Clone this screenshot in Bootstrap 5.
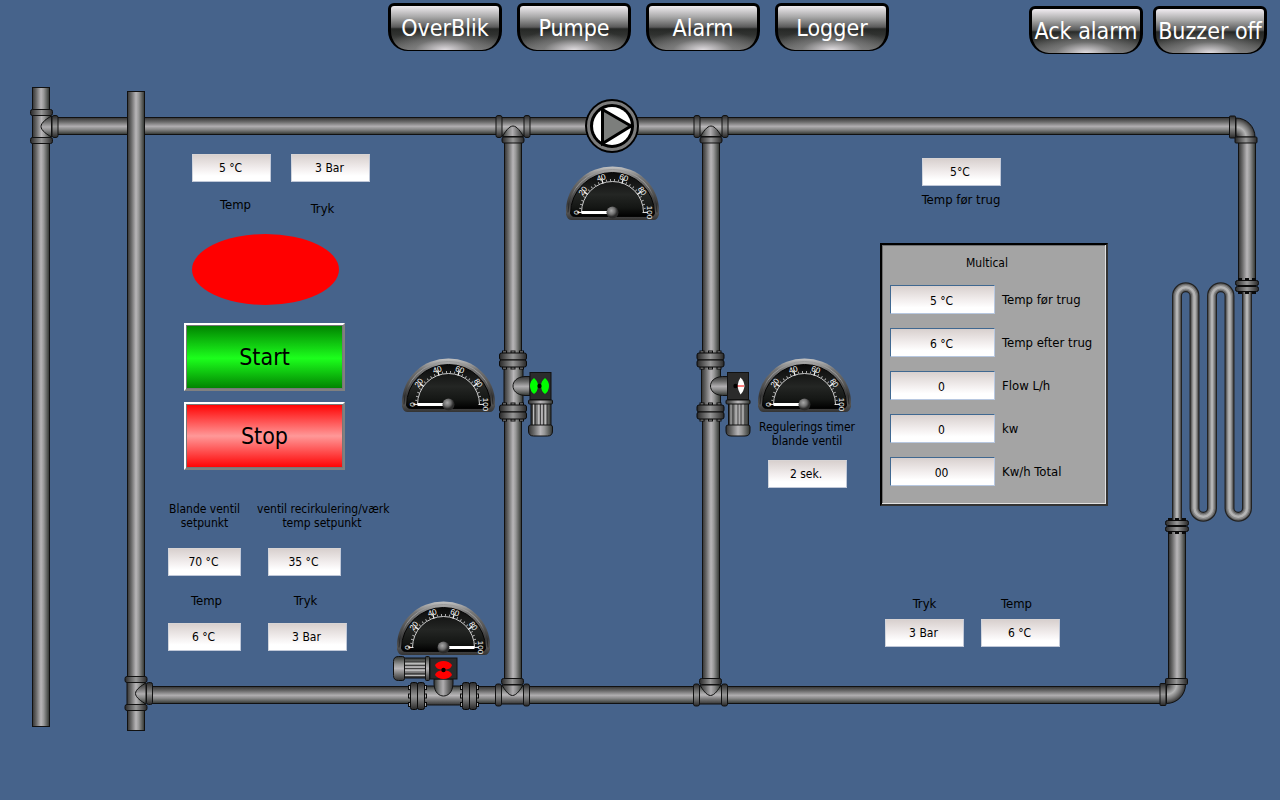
<!DOCTYPE html>
<html lang="da">
<head>
<meta charset="utf-8">
<meta name="viewport" content="width=device-width, initial-scale=1">
<title>Varmeanlæg</title>
<link href="https://cdn.jsdelivr.net/npm/bootstrap@5.3.0/dist/css/bootstrap.min.css" rel="stylesheet">
<style>
  body { background: #46638b; color: #000; font-family: "DejaVu Sans Condensed", "DejaVu Sans", sans-serif; font-size: 12px; line-height: 14px; }

  .topbar { grid-template-columns: 388fr 641fr 251fr; height: 56px; align-items: start; }
  .topbar nav { grid-column: 2; gap: 15px; padding-top: 3px; }
  .topbar .alarm-actions { grid-column: 3; gap: 10px; padding-top: 6px; }
  .btn-chrome {
    --bs-btn-color: #fff; --bs-btn-hover-color: #fff; --bs-btn-active-color: #fff;
    width: 114px; height: 48px; padding: 0; flex: none;
    font-size: 23px; line-height: 44px; white-space: nowrap;
    display: flex; justify-content: center;
    border: solid #000; border-width: 3px 3px 1px; border-radius: 6px 6px 20px 20px;
    background:
      radial-gradient(ellipse 60px 22px at 50% 100%, #e0dce0, rgba(140,140,140,.6) 50%, transparent),
      linear-gradient(#f0ecf0 0, #a8a8a8 25%, #5a5a5a 48%, #262826 52%, #303230 65%, #6a6a6a 100%);
    background-origin: padding-box;
  }
  .btn-chrome:hover { border-color: #000; }

  .zones { inset: 0; grid-template-columns: 168fr 222fr 368fr 98fr 24fr 228fr 172fr; }
  .zone-left { grid-column: 2; padding-top: 98px; }
  .zone-timer { grid-column: 4; padding-top: 364px; gap: 12px; }
  .zone-right { grid-column: 6; padding-top: 102px; }

  .readout {
    width: 79px; height: 28px; padding: 0 2px 1px 0; text-align: center; color: #000; font-size: 12px;
    border: 1px solid; border-color: #d8d4d4 #c0c8d8 #c0c8d8 #d0d4dc; border-radius: 0;
    background: linear-gradient(#d8d0ce, #f4f0f0 55%, #fff 80%);
  }
  .readout-narrow { width: 73px; }
  .readout-wide { width: 105px; height: 29px; padding: 2px 2px 0 0; border-color: #406890 #b8c8e0 #b8c8e0 #406890; }
  .caption { font-size: 13px; white-space: nowrap; }

  .indent-md { padding-left: 16px; }
  .indent-lg { padding-left: 24px; }
  .supply { gap: 20px; height: 62px; }
  .gap-label { gap: 20px; }
  .lamp { width: 147px; height: 71px; border-radius: 50%; background: #f00; }
  .btn-motor {
    width: 161px; height: 68px; padding: 0; border-radius: 0; font-size: 23px; --bs-btn-color: #000;
    border: 2px solid; border-color: #fff #808080 #808080 #fff; box-shadow: inset 0 0 0 1px #777;
  }
  .btn-start { background: linear-gradient(#008000, #1cff1c 52%, #008000); }
  .btn-stop { background: linear-gradient(#f00, #ff9898 50%, #f00); }
  .motor-buttons { gap: 11px; }
  .stack-gap { margin-top: 18px; }
  .pair { display: grid; grid-template-columns: 73px 79px; column-gap: 27px; row-gap: 15px; margin-top: 18px; }
  .setpoint-names { display: grid; grid-template-columns: 73px 130px; column-gap: 16px; margin-top: 32px; white-space: nowrap; }

  .inlet { padding-right: 66px; gap: 7px; }
  .multical { margin-top: 36px; border: 2px solid; border-color: #000 #333 #333 #000; background: #a4a4a4; box-shadow: inset -1px -1px #e0e0e0, inset 1px 1px #707070; padding: 11px 8px 18px; }
  .multical h2 { font-size: 12px; line-height: 14px; margin: 0 14px 15px 0; }
  .multical .meters { gap: 14px; }
  .multical .meter { gap: 7px; align-items: center; }
  .outlet { margin-top: 91px; padding-left: 5px; gap: 17px; }

  .dial { font: 8px "Liberation Sans", sans-serif; fill: #fff; text-anchor: middle; }
</style>
</head>
<body>
<header class="topbar d-grid">
  <nav class="d-flex" aria-label="Sider">
    <button class="btn btn-chrome" type="button">OverBlik</button>
    <button class="btn btn-chrome" type="button">Pumpe</button>
    <button class="btn btn-chrome" type="button">Alarm</button>
    <button class="btn btn-chrome" type="button">Logger</button>
  </nav>
  <div class="alarm-actions d-flex">
    <button class="btn btn-chrome" type="button">Ack alarm</button>
    <button class="btn btn-chrome" type="button">Buzzer off</button>
  </div>
</header>

<main class="position-relative">
  <svg class="d-block w-100" viewBox="0 56 1280 744" aria-hidden="true">
    <defs>
      <linearGradient id="gv"><stop offset="0" stop-color="#333"/><stop offset=".22" stop-color="#686868"/><stop offset=".5" stop-color="#b8b6b8"/><stop offset=".66" stop-color="#989898"/><stop offset="1" stop-color="#303430"/></linearGradient>
      <linearGradient id="gh" x2="0" y2="1"><stop offset="0" stop-color="#333"/><stop offset=".25" stop-color="#686868"/><stop offset=".52" stop-color="#b0aeb0"/><stop offset=".7" stop-color="#888"/><stop offset="1" stop-color="#303430"/></linearGradient>
      <linearGradient id="gc"><stop offset="0" stop-color="#282828"/><stop offset=".5" stop-color="#969696"/><stop offset="1" stop-color="#282828"/></linearGradient>
      <linearGradient id="gch" x2="0" y2="1"><stop offset="0" stop-color="#282828"/><stop offset=".5" stop-color="#969696"/><stop offset="1" stop-color="#282828"/></linearGradient>
      <radialGradient id="elbA" gradientUnits="userSpaceOnUse" cx="0" cy="0" r="20"><stop offset="0" stop-color="#222"/><stop offset=".25" stop-color="#707070"/><stop offset=".5" stop-color="#b4b4b4"/><stop offset=".75" stop-color="#707070"/><stop offset="1" stop-color="#222"/></radialGradient>
      <linearGradient id="rim" x2="0" y2="1"><stop offset="0" stop-color="#c4c4c4"/><stop offset=".2" stop-color="#777"/><stop offset=".7" stop-color="#383838"/><stop offset=".85" stop-color="#555"/><stop offset="1" stop-color="#333"/></linearGradient>
      <linearGradient id="rimIn"><stop offset="0" stop-color="#222"/><stop offset=".1" stop-color="#999"/><stop offset=".9" stop-color="#999"/><stop offset="1" stop-color="#222"/></linearGradient>
      <linearGradient id="face" x2="0" y2="1"><stop offset="0" stop-color="#0a0a0a"/><stop offset=".5" stop-color="#242624"/><stop offset=".8" stop-color="#141614"/><stop offset="1" stop-color="#000"/></linearGradient>
      <radialGradient id="hub" cx=".4" cy=".35"><stop offset="0" stop-color="#a8a8a8"/><stop offset=".6" stop-color="#707070"/><stop offset="1" stop-color="#2c2c2c"/></radialGradient>

      <g id="tee" stroke="#111">
        <rect x="-8.5" y="-14" width="18" height="28" fill="url(#gv)"/>
        <path d="M10.5 -10.5C6 -8 0 -4 0 0S6 8 10.5 10.5z" fill="url(#gh)"/>
        <rect x="-10.5" y="-17" width="22" height="6" rx="2" fill="url(#gc)"/>
        <rect x="-10.5" y="11" width="22" height="6" rx="2" fill="url(#gc)"/>
        <rect x="11" y="-11" width="6" height="22" rx="2" fill="url(#gch)"/>
      </g>
      <g id="elbow" stroke="#111">
        <path d="M0 -19A19 19 0 0 1 19 0H1Q1 -1 0 -1z" fill="url(#elbA)"/>
        <rect x="-6.5" y="-21" width="6" height="22" rx="1" fill="url(#gch)"/>
        <rect x="-1" y="0" width="22" height="6" rx="1" fill="url(#gc)"/>
      </g>
      <g id="flange" stroke="#0a0a0a">
        <path d="M-11 -8h5M-2.500 -8h5M6 -8h5M-11 8h5M-2.500 8h5M6 8h5" stroke-width="3"/>
        <path d="M-10 -8h3M-1.500 -8h3M7 -8h3M-10 8h3M-1.500 8h3M7 8h3" stroke="#aaa"/>
        <rect x="-13.5" y="-7" width="27" height="7" rx="2" fill="url(#gc)"/>
        <rect x="-13.5" y="0" width="27" height="7" rx="2" fill="url(#gc)"/>
      </g>
      <g id="smallflange" stroke="#0a0a0a">
        <path d="M-9 -6.5h4M-2 -6.5h4M5 -6.5h4M-9 6.5h4M-2 6.5h4M5 6.5h4" stroke-width="3"/>
        <rect x="-11.5" y="-5.5" width="23" height="5" rx="2" fill="url(#gc)"/>
        <rect x="-11.5" y="0.5" width="23" height="5" rx="2" fill="url(#gc)"/>
      </g>
      <g id="valve" stroke="#111">
        <rect x="-9" y="-20" width="19" height="40" fill="url(#gv)"/>
        <use href="#flange" y="-26"/><use href="#flange" y="26"/>
        <path d="M17 -9.5H12C3 -9 0 -4 0 0S3 9 12 9.5H17z" fill="url(#gh)"/>
        <rect x="17" y="-13.5" width="21" height="27" fill="#2b2b2b"/>
        <rect x="18" y="17" width="20" height="24" fill="url(#gv)"/>
        <path d="M20.5 18v22M25.5 18v22M32.5 18v22" stroke="#bbb"/>
        <path d="M22.5 18v22M27.5 18v22M30.5 18v22M34.5 18v22" stroke="#444"/>
        <rect x="15.5" y="14" width="24" height="4" rx="1" fill="url(#gv)"/>
        <path d="M15.5 41q0 -2 2 -2h20q2 0 2 2v4q0 5 -5 5h-14q-5 0 -5 -5z" fill="url(#gv)"/>
      </g>
      <g id="gauge">
        <path d="M-46.5 -2A46.5 44 0 0 1 46.5 -2V2Q45 7.500 41 7.500H-41Q-45 7.500 -46.5 2z" fill="url(#rim)"/>
        <path d="M-44.5 0A44.5 43 0 0 1 44.5 0" fill="none" stroke="url(#rimIn)"/>
        <path d="M-42 1A42 41 0 0 1 42 1Q41 4 38 4H-38Q-41 4 -42 1z" fill="url(#face)" stroke="#050505"/>
        <path d="M-31 0A31 31 0 0 1 31 0" fill="none" stroke="#ccc"/>
        <path d="M-32.5 0A32.5 32.5 0 0 1 32.5 0" fill="none" stroke="#aaa" stroke-width="2" pathLength="100" stroke-dasharray="1 3" stroke-dashoffset=".5"/>
        <path d="M-33 0A33 33 0 0 1 33 0" fill="none" stroke="#eee" stroke-width="5" pathLength="100" stroke-dasharray="1.2 18.8" stroke-dashoffset=".6"/>
        <path d="M-35 0h5M35 0h-5" stroke="#ddd"/>
      </g>
      <path id="needle" d="M-31 0H-4" stroke="#fff" stroke-width="3"/>
      <path id="coil" d="M1177 522V296A8.75 8.75 0 0 1 1194.5 296V508A8.75 8.75 0 0 0 1212 508V296A8.75 8.75 0 0 1 1229.5 296V508A8.75 8.75 0 0 0 1247 508V290" fill="none"/>
    </defs>

    <!-- pipe runs -->
    <g stroke="#111">
      <rect x="32.5" y="87.5" width="17" height="639" fill="url(#gv)"/>
      <rect x="56.5" y="117.5" width="1175" height="17" fill="url(#gh)"/>
      <rect x="127.5" y="91.5" width="17" height="639" fill="url(#gv)"/>
      <rect x="150.5" y="686.5" width="1012" height="17" fill="url(#gh)"/>
      <rect x="504.5" y="140.5" width="17" height="541" fill="url(#gv)"/>
      <rect x="702.5" y="140.5" width="17" height="541" fill="url(#gv)"/>
      <rect x="1238.5" y="140.5" width="17" height="140" fill="url(#gv)"/>
      <rect x="1168.5" y="530.5" width="17" height="150" fill="url(#gv)"/>
    </g>
    <!-- heating coil, shaded from rim to highlight -->
    <use href="#coil" stroke="#222" stroke-width="10"/>
    <use href="#coil" stroke="#666" stroke-width="7.5"/>
    <use href="#coil" stroke="#8c8c8c" stroke-width="5"/>
    <use href="#coil" stroke="#b4b4b4" stroke-width="2.5"/>
    <use href="#smallflange" x="1247" y="286"/>
    <use href="#smallflange" x="1177" y="526"/>

    <!-- fittings -->
    <use href="#tee" transform="translate(41 126.5)"/>
    <use href="#tee" transform="translate(135.5 693.5)"/>
    <use href="#tee" transform="translate(513 126) rotate(90)"/>
    <use href="#tee" transform="translate(711 126) rotate(90)"/>
    <use href="#tee" transform="translate(512.5 695.5) rotate(-90)"/>
    <use href="#tee" transform="translate(710.5 695.5) rotate(-90)"/>
    <use href="#elbow" transform="translate(1236 137)"/>
    <use href="#elbow" transform="translate(1166.5 684.5) scale(1 -1)"/>

    <!-- motor valves -->
    <use href="#valve" transform="translate(513 386)"/>
    <path d="M534 378q4 3 4 8t-4 8q-4 -3 -4 -8t4 -8zM545 378q4 3 4 8t-4 8q-4 -3 -4 -8t4 -8z" fill="#0f0"/>
    <circle cx="539.5" cy="386" r="2.200"/>
    <use href="#valve" transform="translate(710.5 386)"/>
    <path d="M740.5 377.5q3.5 3 4 8.500q-.5 5 -4 8.5q-2.5 -4 -3 -8.5q.5 -5 3 -8.5z" fill="#fff"/>
    <path d="M737 386h7" stroke="#f00"/><circle cx="735.5" cy="386" r="2.2"/>
    <use href="#valve" transform="translate(443.5 696) rotate(-90) scale(1 -1)"/>
    <path d="M435 665q3 -4 8.5 -4t8.5 4q-1 4 -6 4.500h-5q-5 -.5 -6 -4.500zM435 675q3 4 8.5 4t8.5 -4q-1 -4 -6 -4.500h-5q-5 .5 -6 4.500z" fill="#f00"/>
    <circle cx="443.5" cy="670" r="2.2"/>

    <!-- pump -->
    <circle cx="612" cy="126" r="27"/>
    <circle cx="612" cy="126" r="23.5" fill="none" stroke="#7c7c7c" stroke-width="3"/>
    <circle cx="612" cy="126" r="19" fill="#fff"/>
    <path d="M602.5 109.5V143.500L631 126z" fill="#7c7e7c" stroke="#000" stroke-width="3"/>

    <!-- gauges -->
    <g class="dial">
      <g transform="translate(612.5 212.5)">
        <use href="#gauge"/><use href="#needle"/><circle r="6" fill="url(#hub)"/>
        <text transform="rotate(-90) translate(0 -34)">0</text><text transform="rotate(-54) translate(0 -34)">20</text><text transform="rotate(-18) translate(0 -34)">40</text><text transform="rotate(18) translate(0 -34)">60</text><text transform="rotate(54) translate(0 -34)">80</text><text transform="rotate(90) translate(0 -34)">100</text>
      </g>
      <g transform="translate(448.5 404.5)">
        <use href="#gauge"/><use href="#needle"/><circle r="6" fill="url(#hub)"/>
        <text transform="rotate(-90) translate(0 -34)">0</text><text transform="rotate(-54) translate(0 -34)">20</text><text transform="rotate(-18) translate(0 -34)">40</text><text transform="rotate(18) translate(0 -34)">60</text><text transform="rotate(54) translate(0 -34)">80</text><text transform="rotate(90) translate(0 -34)">100</text>
      </g>
      <g transform="translate(804.5 404.5)">
        <use href="#gauge"/><use href="#needle"/><circle r="6" fill="url(#hub)"/>
        <text transform="rotate(-90) translate(0 -34)">0</text><text transform="rotate(-54) translate(0 -34)">20</text><text transform="rotate(-18) translate(0 -34)">40</text><text transform="rotate(18) translate(0 -34)">60</text><text transform="rotate(54) translate(0 -34)">80</text><text transform="rotate(90) translate(0 -34)">100</text>
      </g>
      <g transform="translate(443.5 647.5)">
        <use href="#gauge"/><use href="#needle" transform="rotate(180)"/><circle r="6" fill="url(#hub)"/>
        <text transform="rotate(-90) translate(0 -34)">0</text><text transform="rotate(-54) translate(0 -34)">20</text><text transform="rotate(-18) translate(0 -34)">40</text><text transform="rotate(18) translate(0 -34)">60</text><text transform="rotate(54) translate(0 -34)">80</text><text transform="rotate(90) translate(0 -34)">100</text>
      </g>
    </g>
  </svg>

  <div class="zones position-absolute d-grid">
    <section class="zone-left">
      <div class="supply indent-lg d-flex align-items-start">
        <div class="d-flex flex-column align-items-center gap-3">
          <input class="readout" id="t1" value="5 °C" readonly><label for="t1" class="caption ps-2">Temp</label>
        </div>
        <div class="d-flex flex-column align-items-center gap-label">
          <input class="readout" id="p1" value="3 Bar" readonly><label for="p1" class="caption pe-3">Tryk</label>
        </div>
      </div>
      <div class="indent-lg stack-gap"><div class="lamp" role="img" aria-label="Stoppet"></div></div>
      <div class="indent-md stack-gap motor-buttons d-flex flex-column">
        <button class="btn btn-motor btn-start" type="button">Start</button>
        <button class="btn btn-motor btn-stop" type="button">Stop</button>
      </div>
      <div class="setpoint-names text-center">
        <label for="s1">Blande ventil<br>setpunkt</label>
        <label for="s2">ventil recirkulering/værk<br>temp setpunkt</label>
      </div>
      <div class="pair">
        <input class="readout readout-narrow" id="s1" value="70 °C">
        <input class="readout readout-narrow" id="s2" value="35 °C">
      </div>
      <div class="pair text-center">
        <label for="t2" class="caption ps-1">Temp</label><label for="p2" class="caption pe-1">Tryk</label>
        <input class="readout readout-narrow" id="t2" value="6 °C" readonly>
        <input class="readout" id="p2" value="3 Bar" readonly>
      </div>
    </section>

    <section class="zone-timer d-flex flex-column align-items-center text-center text-nowrap">
      <label for="rt">Regulerings timer<br>blande ventil</label>
      <input class="readout" id="rt" value="2 sek.">
    </section>

    <section class="zone-right">
      <div class="inlet d-flex flex-column align-items-center">
        <input class="readout" id="t3" value="5°C" readonly><label for="t3" class="caption">Temp før trug</label>
      </div>
      <div class="multical">
        <h2 class="text-center fw-normal">Multical</h2>
        <div class="meters d-flex flex-column">
          <div class="meter d-flex"><input class="readout readout-wide" id="m1" value="5 °C" readonly><label class="caption" for="m1">Temp før trug</label></div>
          <div class="meter d-flex"><input class="readout readout-wide" id="m2" value="6 °C" readonly><label class="caption" for="m2">Temp efter trug</label></div>
          <div class="meter d-flex"><input class="readout readout-wide" id="m3" value="0" readonly><label class="caption" for="m3">Flow L/h</label></div>
          <div class="meter d-flex"><input class="readout readout-wide" id="m4" value="0" readonly><label class="caption" for="m4">kw</label></div>
          <div class="meter d-flex"><input class="readout readout-wide" id="m5" value="00" readonly><label class="caption" for="m5">Kw/h Total</label></div>
        </div>
      </div>
      <div class="outlet d-flex">
        <div class="d-flex flex-column align-items-center gap-2"><label for="p4" class="caption">Tryk</label><input class="readout" id="p4" value="3 Bar" readonly></div>
        <div class="d-flex flex-column align-items-center gap-2"><label for="t4" class="caption pe-2">Temp</label><input class="readout" id="t4" value="6 °C" readonly></div>
      </div>
    </section>
  </div>
</main>
<script src="https://cdn.jsdelivr.net/npm/bootstrap@5.3.0/dist/js/bootstrap.bundle.min.js"></script>
</body>
</html>
